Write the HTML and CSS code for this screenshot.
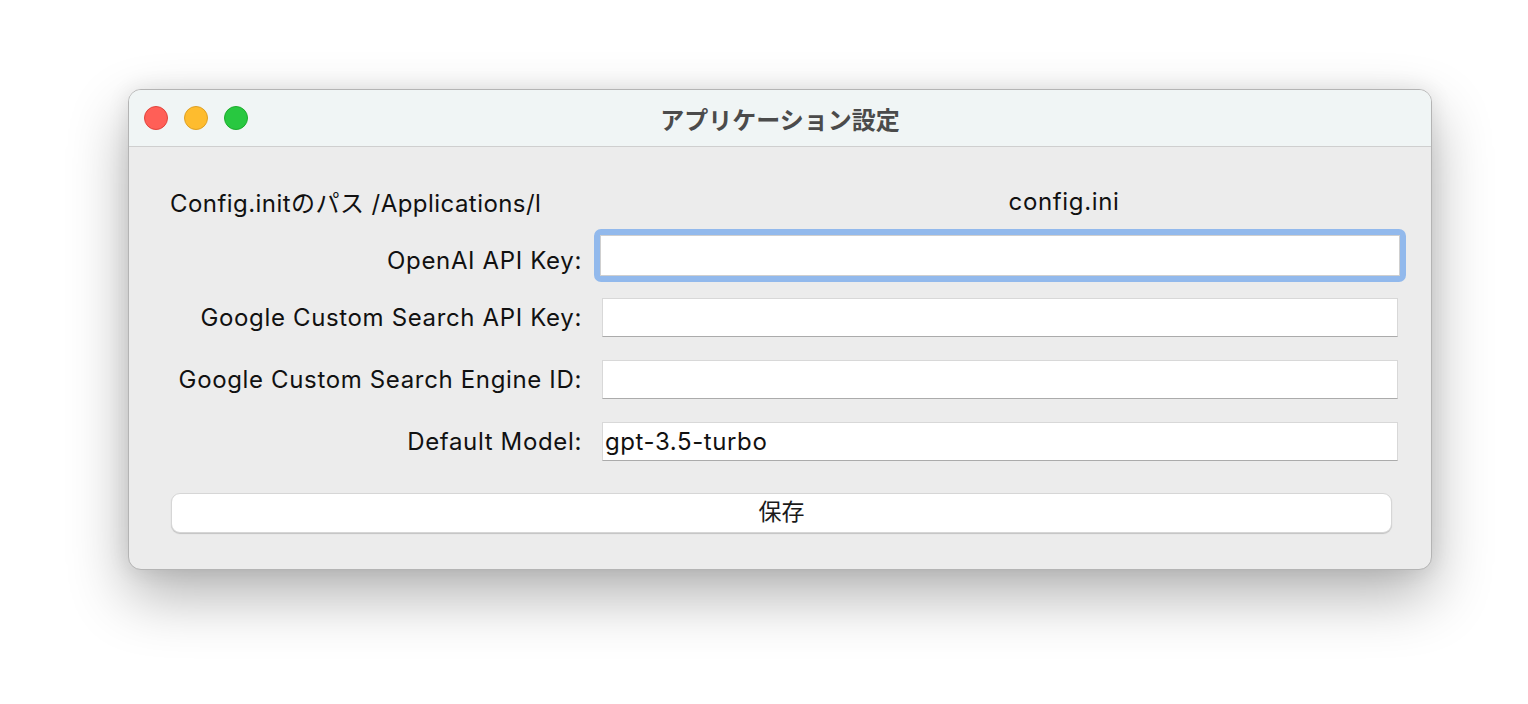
FILE: index.html
```html
<!DOCTYPE html>
<html lang="ja">
<head>
<meta charset="utf-8">
<title>アプリケーション設定</title>
<link rel="stylesheet" href="styles.css">
</head>
<body>
<div class="window">
  <div class="titlebar">
    <div class="lights">
      <span class="light red"></span>
      <span class="light yellow"></span>
      <span class="light green"></span>
    </div>
    <div class="title">アプリケーション設定</div>
  </div>
  <div class="content">
    <div class="form">
      <div class="row row-path">
        <div class="path">Config.initのパス /Applications/l</div>
        <div class="file">config.ini</div>
      </div>
      <div class="row">
        <label class="label label-focus">OpenAI API Key:</label>
        <div class="cell"><div class="ring"><input class="field focused" type="text" value=""></div></div>
      </div>
      <div class="row">
        <label class="label">Google Custom Search API Key:</label>
        <div class="cell"><input class="field" type="text" value=""></div>
      </div>
      <div class="row">
        <label class="label">Google Custom Search Engine ID:</label>
        <div class="cell"><input class="field" type="text" value=""></div>
      </div>
      <div class="row">
        <label class="label">Default Model:</label>
        <div class="cell"><input class="field" type="text" value="gpt-3.5-turbo"></div>
      </div>
    </div>
    <button class="save" type="button">保存</button>
  </div>
</div>
</body>
</html>
```
FILE: styles.css
```css
html, body {
  margin: 0;
  padding: 0;
  background: #ffffff;
}
html {
  height: 100%;
}
body {
  min-height: 704px;
  box-sizing: border-box;
  padding: 89px 0 0 128px;
  font-family: Inter, "Noto Sans CJK JP", sans-serif;
  color: #111;
}
.window {
  width: 1304px;
  height: 481px;
  box-sizing: border-box;
  border: 1px solid #b4b4b4;
  border-radius: 13px;
  background: #ececec;
  overflow: hidden;
  box-shadow: 0 26px 60px rgba(0,0,0,0.30), 0 0 22px rgba(0,0,0,0.09);
  display: flex;
  flex-direction: column;
}
.titlebar {
  height: 56px;
  flex: none;
  background: #f0f5f5;
  border-bottom: 1px solid #cfcfcf;
  display: flex;
  align-items: center;
  justify-content: center;
  position: relative;
}
.lights {
  position: absolute;
  left: 15px;
  top: 16px;
  display: flex;
  gap: 16px;
}
.light {
  width: 22px;
  height: 22px;
  border-radius: 50%;
  border: 1px solid transparent;
}
.red { background: #ff5f57; border-color: #e1443c; }
.yellow { background: #febc2e; border-color: #dea024; }
.green { background: #28c840; border-color: #1cac2c; }
.title {
  font-family: "Noto Sans CJK JP", sans-serif;
  font-weight: 700;
  font-size: 24px;
  color: #4b4b4b;
  line-height: 1;
  padding-top: 1px;
}
.content {
  padding: 37px 41px 0 41px;
  display: flex;
  flex-direction: column;
}
.form {
  display: flex;
  flex-direction: column;
}
.row {
  height: 62px;
  display: grid;
  grid-template-columns: 424px 812px;
  align-items: center;
  font-size: 24px;
  letter-spacing: 0.65px;
}
.row-path {
  height: 40px;
  box-sizing: border-box;
  padding-bottom: 5px;
}
.path {
  white-space: nowrap;
  overflow: hidden;
  letter-spacing: 0.45px;
}
.file {
  text-align: center;
  padding-left: 128px;
}
.label {
  text-align: right;
  padding-right: 12px;
  white-space: nowrap;
}
.label-focus {
  padding-top: 10px;
}
.cell {
  display: flex;
  padding: 0 8px;
}
.ring {
  flex: 1;
  margin: 0 -8px;
  border: 6px solid #92b9ec;
  border-radius: 7px;
  display: flex;
}
.field {
  flex: 1;
  min-width: 0;
  height: 39px;
  box-sizing: border-box;
  margin: 0;
  background: #ffffff;
  border: 1px solid #d8d8d8;
  border-bottom-color: #ababab;
  border-radius: 0;
  padding: 0 2px;
  font-family: Inter, "Noto Sans CJK JP", sans-serif;
  font-size: 24px;
  letter-spacing: 0.6px;
  color: #111;
  outline: none;
}
.field.focused {
  height: 41px;
  border-color: #cfcfcf;
}
.save {
  margin: 21px 0 0 1px;
  width: 1221px;
  height: 40px;
  background: #ffffff;
  border: 1px solid #d6d6d6;
  border-radius: 9px;
  box-shadow: 0 1px 1px rgba(0,0,0,0.18);
  font-family: "Noto Sans CJK JP", sans-serif;
  font-size: 23px;
  color: #1a1a1a;
  padding: 0 0 6px 0;
  line-height: 1;
}
```
